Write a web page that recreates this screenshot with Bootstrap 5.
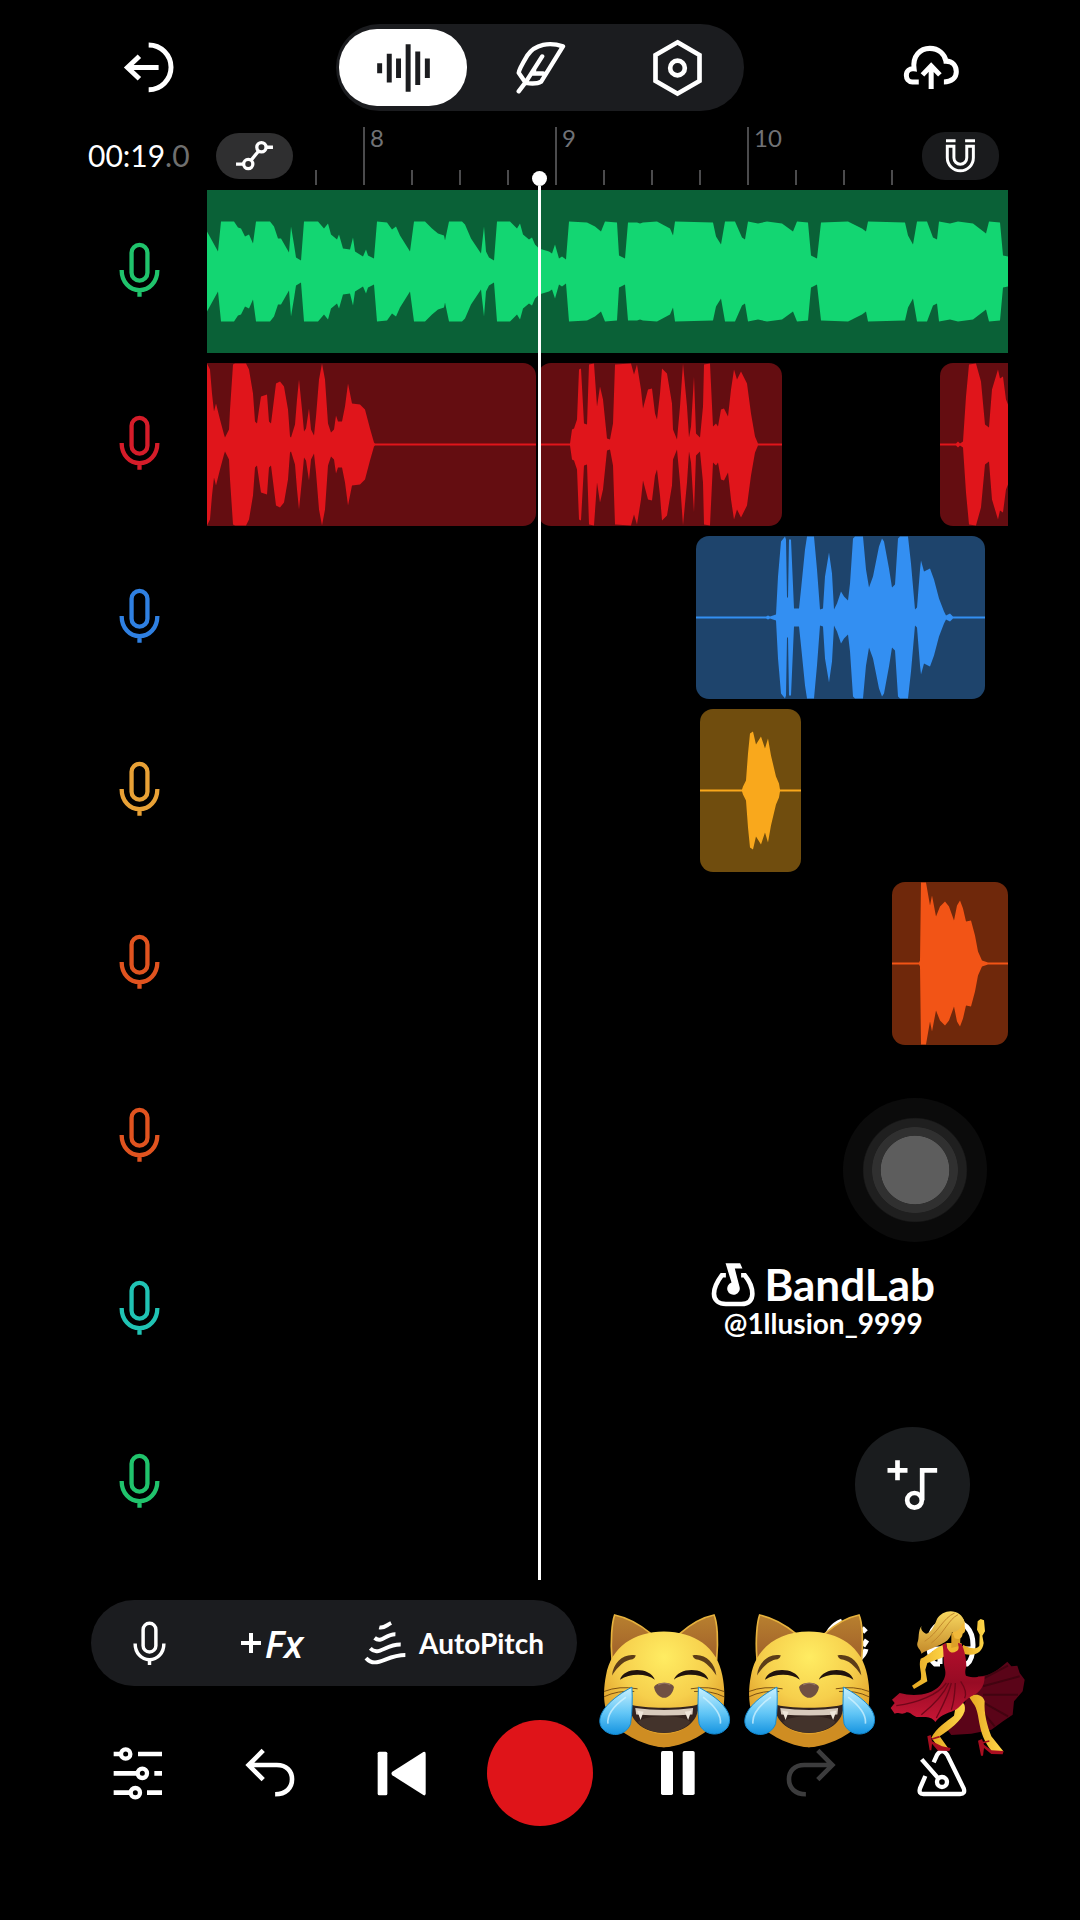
<!DOCTYPE html>
<html lang="en">
<head>
<meta charset="utf-8">
<meta name="viewport" content="width=device-width, initial-scale=1">
<title>BandLab Studio</title>
<link href="https://cdn.jsdelivr.net/npm/bootstrap@5.3.0/dist/css/bootstrap.min.css" rel="stylesheet">
<style>
  body { background: #000; color: #fff; font-family: Lato, sans-serif; }
  svg { display: block; flex: none; fill: none; stroke: currentColor; }
  .solid { fill: currentColor; stroke: none; }
  .studio { padding: 24px 72px 94px; min-height: 100vh; }
  .icon-btn { display: inline-flex; align-items: center; justify-content: center; padding: 0; border: 0; color: #fff; background: none; }
  .icon-btn:hover { color: #fff; }
  .side-btn { width: 154px; }
  .monitor-btn { width: 114px; }
  .mode-tabs { padding: 5px 3px; gap: 9px; background: #1b1c1f; border-radius: 44px; }
  .mode-tabs .icon-btn { width: 128px; height: 77px; border-radius: 38px; }
  .mode-tabs .current { background: #fff; color: #1b1c1f; }
  .head-col { width: 135px; flex: none; }
  .ruler-row { height: 79px; }
  .clock { padding: 8px 0 0 16px; font-size: 30px; line-height: 36px; }
  .clock .tenths { color: #6f6f6f; }
  .lanes { gap: 10px; }
  .lane { height: 163px; }
  .lane.icon-btn { padding-bottom: 3px; }
  .timeline { padding-bottom: 16px; min-width: 0; }
  .automation-slot { width: 108px; flex: none; padding: 10px 0 0 9px; }
  .pill-btn { width: 77px; height: 46px; border-radius: 23px; background: #2f2f30; }
  .pill-btn.snap { height: 48px; background: #1a1b1d; margin: 10px 9px 0 0; }
  .tick { width: 48px; height: 15px; border-left: 2px solid #4b4b4d; margin-bottom: 5px; }
  .tick.bar-start { height: 58px; padding-left: 5px; font-size: 24px; line-height: 22px; color: #707276; }
  .tick.last-tick { flex: 1 1 0; }
  .clip { height: 100%; border-radius: 13px; overflow: hidden; flex: none; }
  .clip svg { width: 100%; height: 100%; stroke: none; }
  .cut-left { border-top-left-radius: 0; border-bottom-left-radius: 0; }
  .cut-right { border-top-right-radius: 0; border-bottom-right-radius: 0; }
  .clip-green { background: #0a6137; color: #13d672; }
  .clip-red { background: #640d11; color: #e0151b; }
  .clip-blue { background: #1e446c; color: #338ff2; }
  .clip-amber { background: #704d0e; color: #f9a81c; }
  .clip-orange { background: #6f280b; color: #f25416; }
  .mic-green, .mic-green:hover { color: #20c36c; }
  .mic-red, .mic-red:hover { color: #d51c29; }
  .mic-blue, .mic-blue:hover { color: #2f80e2; }
  .mic-amber, .mic-amber:hover { color: #e8a136; }
  .mic-orange, .mic-orange:hover { color: #e0531f; }
  .mic-teal, .mic-teal:hover { color: #20c3b4; }
  .playhead { top: 60px; bottom: 0; left: 41.6%; width: 15px; margin-left: -8px; display: flex; flex-direction: column; align-items: center; }
  .playhead .knob { width: 15px; height: 15px; border-radius: 50%; background: #fff; flex: none; }
  .playhead .stem { width: 3px; flex: 1; background: #fff; }
  .touch-dot { right: 21px; top: 987px; width: 144px; height: 144px; border-radius: 50%; background: radial-gradient(circle closest-side, #5d5d5d 47%, #303030 48% 59%, #1f1f1f 60% 71%, #0b0b0b 73%); }
  .credit { right: 73px; top: 1150px; }
  .credit-name { font-size: 44px; line-height: 46px; font-weight: 700; }
  .credit-user { font-size: 28px; line-height: 32px; font-weight: 700; }
  .add-track { right: 38px; top: 1316px; width: 115px; height: 115px; border-radius: 50%; background: #1a1c1e; }
  .tool-row { margin: 20px 0 34px; padding-left: 19px; }
  .tool-pill { width: 486px; height: 86px; border-radius: 43px; background: #1b1c1f; flex: none; }
  .tool-pill .t-mic { width: 116px; }
  .tool-pill .t-fx { width: 130px; }
  .tool-pill .t-pitch { flex: 1; gap: 12px; padding-right: 6px; font-size: 28px; line-height: 36px; font-weight: 700; }
  .fx-text { font: italic 600 38px/44px "Open Sans", sans-serif; }
  .transport .icon-btn { flex: 132 1 0; height: 106px; }
  .transport .rec { flex: 144 1 0; }
  .rec-dot { width: 106px; height: 106px; border-radius: 50%; background: #df1419; }
  .dimmed { color: #3c3c3d !important; }
  .stickers { right: -20px; top: 8px; pointer-events: none; }
  .stickers svg { stroke: none; }
</style>
</head>
<body>
<svg width="0" height="0" class="position-absolute" aria-hidden="true">
  <defs>
    <radialGradient id="fur" cx=".5" cy=".22" r=".75"><stop offset="0" stop-color="#ffec62"/><stop offset=".5" stop-color="#f6cf4c"/><stop offset="1" stop-color="#d8911f"/></radialGradient>
    <linearGradient id="ear" x1="0" y1="0" x2="0" y2="1"><stop offset="0" stop-color="#b8802f"/><stop offset="1" stop-color="#a0602a"/></linearGradient>
    <linearGradient id="drop" x1="0" y1="0" x2="0" y2="1"><stop offset="0" stop-color="#c9f1ff"/><stop offset=".55" stop-color="#62c6f6"/><stop offset="1" stop-color="#1593e0"/></linearGradient>
    <linearGradient id="hair" x1="0" y1="0" x2="0" y2="1"><stop offset="0" stop-color="#f8d860"/><stop offset="1" stop-color="#c48a2a"/></linearGradient>
    <linearGradient id="skin" x1="0" y1="0" x2="1" y2="0"><stop offset="0" stop-color="#e5a721"/><stop offset="1" stop-color="#ffd84a"/></linearGradient>
    <linearGradient id="dress" x1="0" y1="0" x2="0" y2="1"><stop offset="0" stop-color="#b50f2c"/><stop offset=".5" stop-color="#970b24"/><stop offset="1" stop-color="#c81636"/></linearGradient>
    <symbol id="mic" viewBox="58 198 124 168">
      <g fill="none" stroke="currentColor" stroke-width="13"><rect x="96" y="206" width="48" height="108" rx="24"/><path d="M66 282C66 318 90 343 120 343S174 318 174 282M120 343V363"/></g>
    </symbol>
    <symbol id="cat" viewBox="66 100 400 410">
      <path d="M108 240C103 185 108 130 116 108C150 115 190 135 225 164Z" fill="url(#ear)" stroke="#e6b23d" stroke-width="5"/>
      <path d="M423 240C428 185 425 130 415 108C380 115 345 135 312 164Z" fill="url(#ear)" stroke="#e6b23d" stroke-width="5"/>
      <path d="M264 158C355 158 425 205 440 290C447 325 447 355 444 380C425 440 330 500 264 506C200 500 105 440 87 380C83 355 83 325 90 290C105 205 175 158 264 158Z" fill="url(#fur)"/>
      <path d="M160 385C170 440 220 467 265 467S360 440 370 385L400 452C350 490 300 503 264 506C230 503 180 490 130 452Z" fill="#cf8d22"/>
      <g fill="#5d3d18"><path d="M108 290C112 250 145 222 180 230Q176 240 170 241C148 242 126 262 108 290ZM422 290C418 250 385 222 350 230Q354 240 360 241C382 242 404 262 422 290Z"/></g>
      <path d="M132 303C143 264 223 264 237 303C212 283 162 283 132 303ZM294 303C308 264 388 264 398 303C370 283 318 283 294 303Z" fill="#21130d"/>
      <path d="M235 325C236 308 294 308 294 325C293 342 278 357 265 357S236 342 235 325Z" fill="#705042"/>
      <path d="M247 318Q265 308 284 318" fill="none" stroke="#927263" stroke-width="4"/>
      <g fill="none" stroke="#7c5012" stroke-width="3"><path d="M84 338Q130 320 185 330M84 354Q125 334 175 338M445 338Q400 320 345 330M445 354Q405 334 355 338"/></g>
      <path d="M162 376C190 391 340 391 368 376C371 432 320 463 265 463S160 432 162 376Z" fill="#33231e"/>
      <path d="M178 388Q265 400 352 388L350 407Q265 413 181 407Z" fill="#d8cbbd"/>
      <path d="M184 396L194 424L203 399ZM347 396L337 424L327 399Z" fill="#eee5da"/>
      <path d="M186 430C205 407 325 407 344 430C325 454 295 462 265 462S203 453 186 430Z" fill="#43332b"/>
      <path d="M168 325C170 360 169 400 164 435C150 474 98 478 76 445C55 405 110 355 168 325Z" fill="url(#drop)" stroke="#148bd2" stroke-width="3"/>
      <path d="M368 325C425 355 480 400 456 445C433 478 384 470 370 435C365 400 367 360 368 325Z" fill="url(#drop)" stroke="#148bd2" stroke-width="3"/>
      <path d="M150 355C115 380 92 405 96 435M382 355C415 380 438 405 434 435" fill="none" stroke="#d8f5ff" stroke-width="5" opacity=".7"/>
    </symbol>
  </defs>
</svg>

<div class="studio">
  <header class="d-flex justify-content-between align-items-center">
    <button class="btn icon-btn side-btn" aria-label="Exit">
      <svg width="52" height="53" viewBox="160 90 156 160" stroke-width="15"><path d="M237 102A67.500 67.500 0 0 1 237 237M267 170H174M209 136L173 170L209 204"/></svg>
    </button>
    <nav class="mode-tabs d-flex" aria-label="Studio views">
      <button class="btn icon-btn current" aria-label="Tracks"><svg width="53" height="48" viewBox="919 98 160 144" stroke-width="15"><path d="M927 156V186M956 127V214M984 141V200M1013 98V242M1042 120V221M1071 141V200"/></svg></button>
      <button class="btn icon-btn" aria-label="Lyrics"><svg width="51" height="53" viewBox="1334 86 152 158" stroke-width="13" stroke-linejoin="round" stroke-linecap="round"><path d="M1477 102C1438 89 1394 94 1370 130C1358 150 1345 172 1345 181L1366 211C1386 214 1404 212 1412 207ZM1345 236L1367 207L1415 132M1391 172L1384 183H1418"/></svg></button>
      <button class="btn icon-btn" aria-label="Project settings"><svg width="51" height="58" viewBox="278 84 152 174" stroke-width="14"><path d="M354 94L420 132V210L354 248L288 210V132Z"/><circle cx="354" cy="171" r="22"/></svg></button>
    </nav>
    <button class="btn icon-btn side-btn" aria-label="Save to cloud">
      <svg width="57" height="45" viewBox="1030 98 170 134" stroke-width="15"><path d="M1077 208H1058C1046 208 1040 199 1040 188C1040 175 1050 167 1063 169C1058 130 1082 108 1110 108C1136 108 1155 125 1158 146C1178 146 1189 160 1189 178C1189 196 1175 208 1152 208M1114 229V160M1088 187L1114 160L1140 187"/></svg>
    </button>
  </header>

  <main class="d-flex">
    <div class="head-col">
      <div class="ruler-row d-flex align-items-center clock"><span>00:19<span class="tenths">.0</span></span></div>
      <div class="lanes d-flex flex-column" id="heads"></div>
    </div>
    <div class="timeline flex-grow-1 position-relative">
      <div class="ruler-row d-flex align-items-end">
        <div class="automation-slot align-self-center">
          <button class="btn icon-btn pill-btn" aria-label="Automation"><svg width="39" height="31" viewBox="496 390 116 94" stroke-width="10"><circle cx="575" cy="412" r="14"/><circle cx="535" cy="463" r="14"/><path d="M498 463H520M590 412H610M544 451L566 424"/></svg></button>
        </div>
        <div class="tick"></div><div class="tick bar-start">8</div><div class="tick"></div><div class="tick"></div><div class="tick"></div>
        <div class="tick bar-start">9</div><div class="tick"></div><div class="tick"></div><div class="tick"></div>
        <div class="tick bar-start">10</div><div class="tick"></div><div class="tick"></div><div class="tick last-tick"></div>
        <button class="btn icon-btn pill-btn snap align-self-center" aria-label="Snap to grid"><svg width="31" height="35" viewBox="1155 386 94 106" stroke-width="9"><path d="M1158 394H1187M1216 394H1246"/><path d="M1162 411V446A39 39 0 0 0 1241 446V411H1221V446A19 19 0 0 1 1182 446V411Z"/></svg></button>
      </div>
      <div class="lanes d-flex flex-column" id="lanes"></div>

      <div class="playhead position-absolute"><span class="knob"></span><span class="stem"></span></div>
      <div class="touch-dot position-absolute"></div>
      <div class="credit position-absolute text-center">
        <div class="credit-name d-flex align-items-center justify-content-center gap-2">
          <svg width="45" height="45" viewBox="88 1172 136 136"><path d="M133 1212H121C109 1228 97 1250 97 1268C97 1289 113 1299 133 1299H180C202 1299 213 1287 213 1268C213 1250 203 1228 190 1212H179" stroke-width="14"/><path class="solid" d="M132 1176H176L183 1192H160L174 1246A19 19 0 1 1 150 1234Z"/></svg>
          <span>BandLab</span>
        </div>
        <div class="credit-user">@1llusion_9999</div>
      </div>
      <button class="btn icon-btn add-track position-absolute" aria-label="Add track"><svg width="53" height="52" viewBox="138 113 158 156" stroke-width="14"><path d="M142 147H202M172 117V177M246 237V147H291"/><circle cx="223" cy="237" r="22"/></svg></button>
    </div>
  </main>

  <footer class="position-relative">
    <div class="tool-row d-flex align-items-center">
      <div class="tool-pill d-flex align-items-center">
        <button class="btn icon-btn t-mic" aria-label="Voice input"><svg width="33" height="45"><use href="#mic"/></svg></button>
        <button class="btn icon-btn t-fx" aria-label="Add effects"><svg width="20" height="20" viewBox="0 0 20 20" stroke-width="4"><path d="M0 10H20M10 0V20"/></svg><span class="fx-text ps-1">Fx</span></button>
        <button class="btn icon-btn t-pitch"><svg width="43" height="45" viewBox="848 88 128 136" stroke-width="12"><path d="M893 107C907 111 914 101 929 94M879 139C900 157 912 127 942 128M866 171C891 196 911 158 958 159M853 200C884 234 912 191 972 191"/></svg><span>AutoPitch</span></button>
      </div>
      <div class="d-flex flex-grow-1 justify-content-end">
        <button class="btn icon-btn" aria-label="Loop"><svg width="48" height="52" viewBox="0 0 48 52" stroke-width="5"><path d="M20 4C10 8 4 16 4 26C4 38 12 46 24 46C34 46 42 40 44 32M40 11L44 15M41 29L45 23"/></svg></button>
        <button class="btn icon-btn monitor-btn ms-4" aria-label="Monitor"><svg width="50" height="52" viewBox="0 0 50 52" stroke-width="5"><path d="M14 47H9C5 44 3 36 3 28C3 12 12 4 25 4S47 12 47 28C47 36 45 44 41 47H36V32H46M14 47V32H4"/></svg></button>
      </div>
    </div>
    <div class="transport d-flex">
      <button class="btn icon-btn" aria-label="Mixer"><svg width="50" height="55" viewBox="105 465 150 165" stroke-width="14"><path d="M107 489H128M180 489H252M107 547H178M229 547H252M107 605H157M207 605H252"/><g stroke-width="13"><circle cx="143" cy="489" r="14"/><circle cx="193" cy="547" r="14"/><circle cx="172" cy="605" r="14"/></g></svg></button>
      <button class="btn icon-btn" aria-label="Undo"><svg width="51" height="50" viewBox="496 474 154 150" stroke-width="14"><path d="M508 525H592C622 525 638 544 638 568C638 594 620 613 587 613M551 481L507 525L551 569"/></svg></button>
      <button class="btn icon-btn" aria-label="Back to start"><svg class="solid" width="50" height="45" viewBox="895 480 150 135"><rect x="897" y="482" width="29" height="131" rx="5"/><path d="M941 542L1034 483Q1041 480 1041 488V607Q1041 616 1034 612L941 553Q936 547 941 542Z"/></svg></button>
      <button class="btn icon-btn rec" aria-label="Record"><span class="rec-dot"></span></button>
      <button class="btn icon-btn" aria-label="Pause"><svg class="solid" width="34" height="44" viewBox="244 512 102 132"><rect x="244" y="512" width="36" height="132" rx="5"/><rect x="309" y="512" width="36" height="132" rx="5"/></svg></button>
      <button class="btn icon-btn dimmed" aria-label="Redo"><svg width="51" height="50" viewBox="496 474 154 150" stroke-width="14"><path d="M638 525H554C524 525 508 544 508 568C508 594 526 613 559 613M595 481L639 525L595 569"/></svg></button>
      <button class="btn icon-btn" aria-label="Metronome"><svg width="52" height="50" viewBox="1006 504 156 150" stroke-width="13"><path d="M1034 588L1018 625Q1013 642 1028 642H1138Q1155 642 1149 625L1100 525Q1084 502 1069 525L1059 547M1023 538L1073 595"/><circle cx="1084" cy="606" r="15"/></svg></button>
    </div>
    <div class="stickers position-absolute d-flex" aria-hidden="true">
      <svg width="133" height="137" class="mt-1 me-2"><use href="#cat"/></svg>
      <svg width="133" height="137" class="mt-1 ms-1 me-1"><use href="#cat"/></svg>
      <svg width="140" height="150" class="ms-2" viewBox="930 85 420 450">
        <path d="M1200 290C1240 290 1265 265 1288 246L1300 260L1318 258L1325 280L1340 300L1334 335L1308 365L1304 405L1275 425L1240 450L1180 462L1120 466L1100 440L1150 390Z" fill="#5a0418"/>
        <path d="M1210 300L1290 258M1215 320L1325 290M1215 345L1320 345M1210 365L1290 410M1200 380L1250 440" stroke="#420310" stroke-width="6"/>
        <path d="M1172 350C1195 340 1215 345 1220 365C1217 400 1228 440 1240 470L1276 515L1245 520C1225 495 1212 470 1206 440C1200 410 1198 385 1185 370Z" fill="url(#skin)"/>
        <path d="M1135 370C1150 360 1165 370 1160 395C1150 425 1115 450 1085 470L1110 505L1085 508L1060 474C1075 445 1105 425 1128 408Z" fill="url(#skin)"/>
        <path d="M1048 470L1058 466L1062 485L1092 500L1118 505L1114 514L1080 513L1062 492L1060 512H1055ZM1200 483L1212 478L1218 495L1240 512L1277 514L1274 524L1240 523L1218 505L1215 528H1209Z" fill="#a80e20"/>
        <path d="M1062 478L1085 471M1210 490L1234 484" stroke="#a80e20" stroke-width="5"/>
        <path d="M1095 195C1070 205 1055 225 1028 237C1020 260 1034 280 1028 300L1002 318L1008 328L1030 315L1048 305L1042 270L1048 250C1075 240 1095 235 1105 225Z" fill="url(#skin)"/>
        <path d="M1155 195C1175 207 1195 210 1204 198L1205 165L1197 150L1199 125L1208 118L1218 122L1221 155L1213 168L1217 190C1213 220 1190 232 1155 222Z" fill="url(#skin)"/>
        <path d="M1105 190L1150 190L1155 215L1140 235L1108 225Z" fill="#efb52e"/>
        <path d="M1120 160L1148 155L1146 198L1120 205Z" fill="#dda027"/>
        <path d="M1110 120C1125 95 1165 105 1160 140C1164 155 1160 160 1154 162C1152 178 1143 180 1130 176Z" fill="#f1b93a"/>
        <path d="M1160 128C1150 85 1095 85 1077 118C1065 150 1050 168 1040 160C1025 150 1030 140 1032 136C1018 155 1025 175 1018 190C1015 205 1030 210 1030 222C1050 210 1080 200 1100 188C1112 182 1118 170 1122 158C1135 158 1148 150 1152 134Z" fill="url(#hair)"/>
        <path d="M1140 105C1110 120 1100 160 1060 190M1130 100C1095 115 1080 160 1040 185" fill="none" stroke="#c2872c" stroke-width="3"/>
        <path d="M1103 190C1108 215 1120 225 1135 215C1147 208 1140 198 1140 190L1150 192C1158 205 1165 235 1165 260C1160 275 1162 283 1164 288C1185 296 1205 292 1220 290C1220 320 1205 340 1180 350C1150 368 1145 390 1120 396C1100 402 1085 410 1072 427C1060 408 1040 412 1025 412C1005 415 1000 395 985 398C970 408 960 395 950 402L938 385L950 370L942 360L965 340C1010 352 1060 345 1085 318C1100 300 1106 285 1100 265C1095 240 1098 210 1093 195Z" fill="url(#dress)"/>
        <path d="M1105 310C1080 345 1020 370 955 378M1112 310C1095 350 1055 385 1030 405M1120 310C1110 350 1090 385 1075 415M1132 310C1130 340 1130 360 1120 390M1148 305C1165 330 1165 345 1160 356" fill="none" stroke="#6f0619" stroke-width="4"/>
      </svg>
    </div>
  </footer>
</div>

<script src="https://cdn.jsdelivr.net/npm/bootstrap@5.3.0/dist/js/bootstrap.bundle.min.js"></script>
<script>
  // Visible span of the timeline and height of a lane, in timeline units.
  const SPAN = 801, LANE = 163;
  // Each clip: start, length, colour, edge classes and its envelope as "position,level" pairs.
  const tracks = [
    { mic: 'green', clips: [{ at: 0, len: 801, color: 'green', edge: 'cut-left cut-right', env: '0,40 11,20 14,50 27,50 31,44 34,43 38,35 42,37 46,28 49,50 63,50 67,45 71,33 74,33 82,19 84,45 87,27 89,14 94,11 97,50 111,50 117,43 121,48 124,37 130,32 132,37 136,23 143,22 146,34 148,20 156,15 159,22 161,16 167,13 170,50 180,49 185,42 189,45 193,36 203,20 207,50 218,50 225,43 231,38 237,36 238,31 242,50 255,50 258,47 264,33 274,18 277,45 279,20 282,14 287,11 290,50 303,50 310,43 313,48 316,37 322,32 325,34 328,27 332,23 342,20 345,18 348,27 352,13 355,15 359,12 362,50 380,49 388,45 394,40 398,50 410,49 412,16 418,13 421,49 430,49 433,48 436,49 450,50 463,43 466,36 468,50 506,49 509,35 514,27 518,50 528,50 535,34 538,32 541,50 551,48 560,50 575,48 586,40 590,50 601,49 604,16 610,13 614,49 641,50 655,43 659,40 661,50 698,49 701,36 706,27 710,50 720,50 726,34 730,32 732,50 743,48 751,50 766,48 779,38 782,50 793,49 796,16 801,15' }] },
    { mic: 'red', clips: [
      { at: 0, len: 329, color: 'red', edge: 'cut-left', env: '0,81 3,75 5,51 7,33 9,41 13,25 17,10 18,7 22,15 23,35 26,80 28,81 39,81 42,75 46,51 48,23 50,21 52,35 54,48 60,50 62,23 64,21 67,45 69,61 73,63 77,58 81,35 83,8 84,7 88,20 90,45 92,65 95,35 97,13 99,16 102,36 104,15 107,9 109,28 112,65 115,81 118,65 121,21 124,12 127,15 129,29 131,23 135,23 138,38 141,61 145,41 153,40 158,35 163,16 167,2 168,1 329,1' },
      { at: 331, len: 244, color: 'red', edge: '', env: '0,1 32,1 34,15 36,16 39,25 41,75 43,76 46,21 49,20 51,80 56,81 59,38 62,58 65,45 69,6 72,5 75,21 77,80 93,81 96,70 99,80 103,55 105,36 110,55 114,56 117,31 119,25 122,51 124,76 129,71 134,41 135,15 139,5 142,38 145,81 149,38 151,7 153,18 156,68 158,11 162,7 165,38 166,80 172,81 175,18 178,21 180,18 183,35 186,36 190,28 193,55 196,75 199,65 203,73 209,61 213,31 217,8 220,1 244,1' },
      { at: 733, len: 68, color: 'red', edge: 'cut-right', env: '0,1 16,1 18,3 20,1 23,3 26,48 29,80 36,81 41,63 45,20 49,17 52,55 58,75 60,66 63,68 66,45 68,40' }] },
    { mic: 'blue', clips: [{ at: 489, len: 289, color: 'blue', edge: '', env: '0,1 70,1 72,2 74,1 80,3 82,41 85,76 89,81 90,78 91,20 92,20 93,78 95,78 98,9 103,9 105,28 109,68 111,81 118,81 121,48 124,8 127,9 129,41 133,65 136,44 138,8 141,14 145,26 148,21 152,17 154,34 157,79 159,81 167,81 170,48 173,30 177,41 183,71 186,79 188,76 193,49 196,30 199,33 202,79 204,81 212,81 215,54 217,31 219,8 221,10 224,48 225,57 228,46 234,49 238,38 243,19 248,6 250,2 254,4 257,1 289,1' }] },
    { mic: 'amber', clips: [{ at: 493, len: 101, color: 'amber', edge: '', env: '0,1 42,1 43,4 45,8 46,10 48,37 50,57 53,59 56,46 61,54 65,42 68,52 71,35 76,14 79,7 80,1 101,1' }] },
    { mic: 'orange', clips: [{ at: 685, len: 116, color: 'orange', edge: '', env: '0,1 27,1 28,3 29,81 34,81 38,58 40,68 44,47 48,57 53,62 57,57 62,43 65,58 68,63 71,55 74,42 79,43 83,28 86,12 90,3 96,1 116,1' }] },
    { mic: 'orange', clips: [] }, { mic: 'teal', clips: [] }, { mic: 'green', clips: [] }
  ];
  const mid = LANE / 2, pct = v => (v / SPAN * 100).toFixed(3) + '%';
  tracks.forEach((t, i) => {
    document.getElementById('heads').insertAdjacentHTML('beforeend',
      `<button class="btn icon-btn lane mic-${t.mic}" aria-label="Track ${i + 1}"><svg width="41" height="56"><use href="#mic"/></svg></button>`);
    let end = 0, html = '';
    for (const c of t.clips) {
      const p = c.env.split(' ').map(s => s.split(',').map(Number));
      const top = p.map(([x, a]) => `${x} ${mid - a}`), low = p.map(([x, a]) => `${x} ${mid + a}`).reverse();
      html += `<div class="clip clip-${c.color} ${c.edge}" style="margin-left:${pct(c.at - end)};width:${pct(c.len)}"><svg class="solid" viewBox="0 0 ${c.len} ${LANE}" preserveAspectRatio="none"><path fill="currentColor" d="M${top.join('L')}L${low.join('L')}Z"/></svg></div>`;
      end = c.at + c.len;
    }
    document.getElementById('lanes').insertAdjacentHTML('beforeend', `<div class="lane d-flex">${html}</div>`);
  });
</script>
</body>
</html>
